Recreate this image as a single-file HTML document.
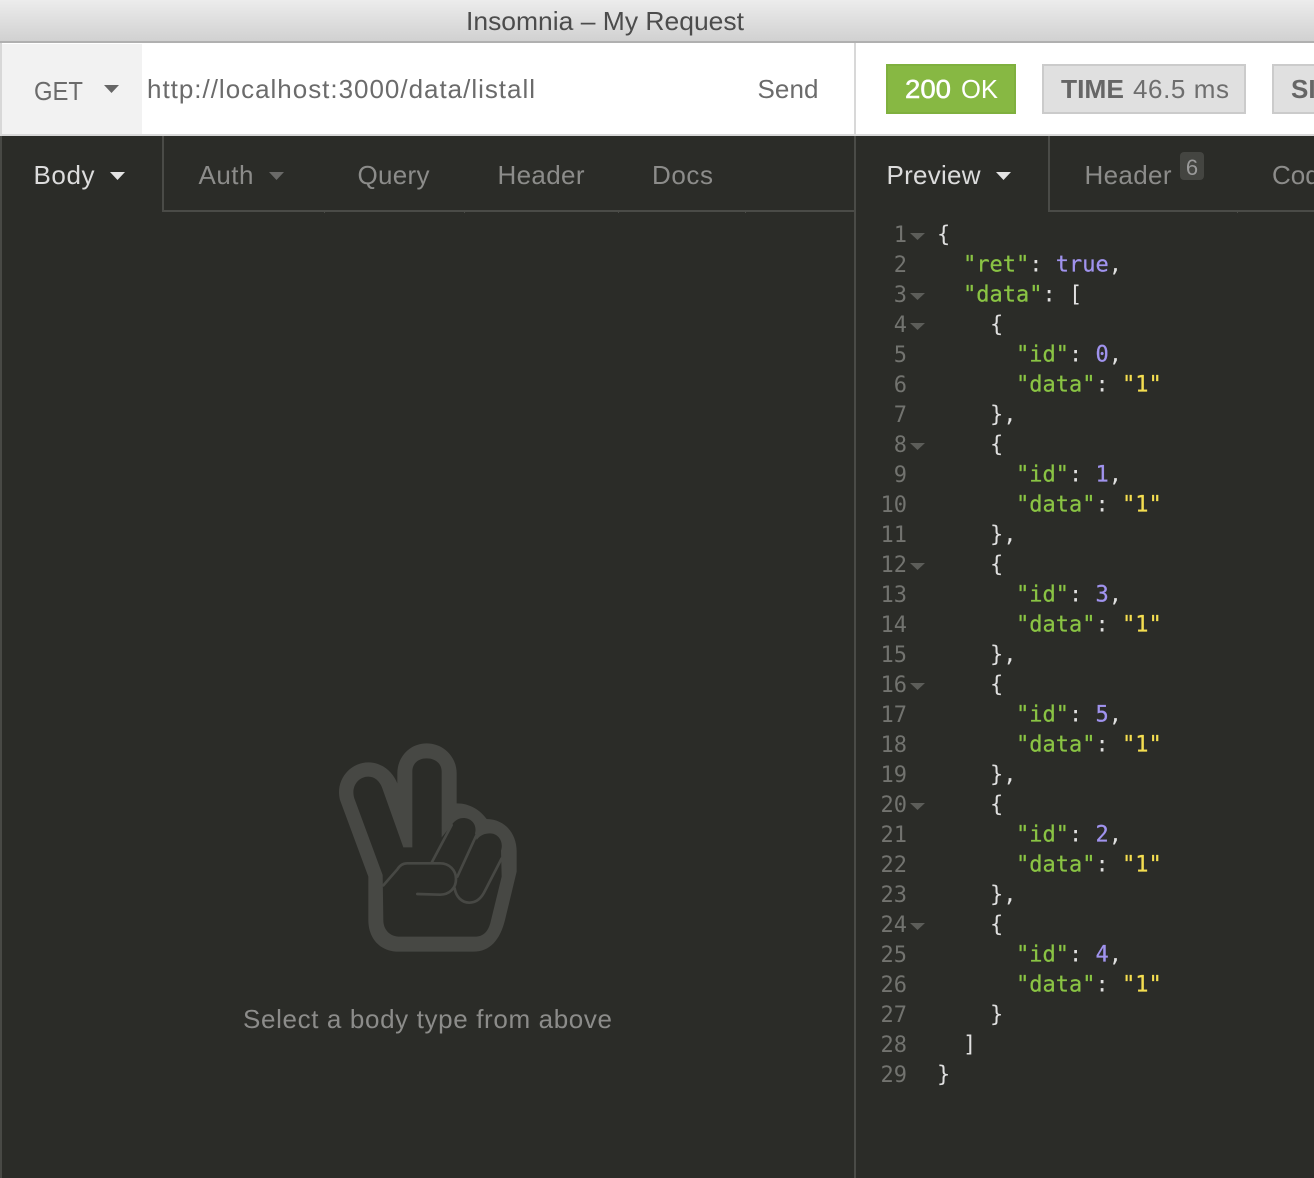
<!DOCTYPE html>
<html><head><meta charset="utf-8"><title>Insomnia – My Request</title>
<style>
html,body{margin:0;padding:0;width:1314px;height:1178px;overflow:hidden;background:#2b2c28}
svg{display:block;position:absolute;left:0;top:0}
.s{font-family:"Liberation Sans",sans-serif;font-size:26px}
.m text{font-family:"DejaVu Sans Mono","Liberation Mono",monospace;font-size:22px;white-space:pre;fill:#e0e0e0}
.n text{font-family:"DejaVu Sans Mono","Liberation Mono",monospace;font-size:22px;fill:#72736f;text-anchor:end}
.k{fill:#8ac444;stroke:#8ac444;stroke-width:.25}.v{fill:#a093ee;stroke:#a093ee;stroke-width:.25}.y{fill:#f4de50;stroke:#f4de50;stroke-width:.25}
</style></head>
<body>
<svg width="1314" height="1178" viewBox="0 0 1314 1178" xmlns="http://www.w3.org/2000/svg">
<defs><linearGradient id="g" x1="0" y1="0" x2="0" y2="1"><stop offset="0" stop-color="#ececec"/><stop offset="1" stop-color="#d1d1d1"/></linearGradient></defs>
<rect width="1314" height="1178" fill="#2b2c28"/>
<rect width="1314" height="41" fill="url(#g)"/>
<rect y="41" width="1314" height="2" fill="#b0b0b0"/>
<text class="s" x="466" y="30" fill="#4c4c4c" textLength="278" lengthAdjust="spacingAndGlyphs">Insomnia – My Request</text>

<rect y="43" width="1314" height="91" fill="#fff"/>
<rect x="2" y="44" width="140" height="90" fill="#f2f2f2"/>
<rect y="43" width="2" height="93" fill="#d8d8d8"/>
<rect y="134" width="1314" height="2" fill="#d8d8d8"/>
<rect x="854" y="43" width="2" height="93" fill="#d8d8d8"/>
<text class="s" x="34" y="100" fill="#6b6b6b" textLength="49" lengthAdjust="spacingAndGlyphs">GET</text>
<path d="M104 85h15l-7.500 8z" fill="#666"/>
<text class="s" x="147" y="98" fill="#6b6b6b" textLength="388">http://localhost:3000/data/listall</text>
<text class="s" x="757.500" y="98" fill="#6b6b6b" textLength="61">Send</text>

<rect x="886" y="64" width="130" height="50" fill="#7fb03e"/>
<rect x="888" y="66" width="126" height="46" fill="#87b843"/>
<text class="s" x="905" y="98" fill="#fff" stroke="#fff" stroke-width=".5" textLength="46" lengthAdjust="spacingAndGlyphs">200</text>
<text class="s" x="961" y="98" fill="#fff" textLength="37" lengthAdjust="spacingAndGlyphs">OK</text>
<rect x="1043" y="65" width="202" height="48" fill="#e0e0e0" stroke="#cbcbcb" stroke-width="2"/>
<text class="s" x="1061" y="98" fill="#666" font-weight="bold" textLength="63" lengthAdjust="spacingAndGlyphs">TIME</text>
<text class="s" x="1133" y="98" fill="#6e6e6e" textLength="96">46.5 ms</text>
<rect x="1273" y="65" width="60" height="48" fill="#e0e0e0" stroke="#cbcbcb" stroke-width="2"/>
<text class="s" x="1291" y="98" fill="#666" font-weight="bold">SI</text>

<rect x="0" y="136" width="2" height="1042" fill="#484945"/>
<rect x="854" y="136" width="2" height="1042" fill="#4a4b47"/>
<rect x="162" y="136" width="2" height="76" fill="#4a4b47"/>
<rect x="162" y="210" width="692" height="2" fill="#4a4b47"/>
<rect x="1048" y="136" width="2" height="76" fill="#4a4b47"/>
<rect x="1048" y="210" width="266" height="2" fill="#4a4b47"/>
<path d="M324 212h1v1h-1zM464 212h1v1h-1zM618 212h1v1h-1zM745 212h1v1h-1zM1237 212h1v1h-1z" fill="#4a4b47"/>

<text class="s" x="33.500" y="184" fill="#dcdcdc" textLength="61">Body</text>
<path d="M110 172h15l-7.500 8z" fill="#e4e4e4"/>
<text class="s" x="198.500" y="184" fill="#8c8c8a" textLength="55">Auth</text>
<path d="M269 172h15l-7.500 8z" fill="#6a6a68"/>
<text class="s" x="357.500" y="184" fill="#8c8c8a" textLength="72">Query</text>
<text class="s" x="497.500" y="184" fill="#8c8c8a" textLength="87">Header</text>
<text class="s" x="652" y="184" fill="#8c8c8a" textLength="61">Docs</text>

<text class="s" x="886.500" y="184" fill="#dcdcdc" textLength="94">Preview</text>
<path d="M996 172h15l-7.500 8z" fill="#e4e4e4"/>
<text class="s" x="1084.500" y="184" fill="#8c8c8a" textLength="87">Header</text>
<rect x="1180" y="152" width="24" height="28" rx="4" fill="#444541"/>
<text x="1192" y="175" text-anchor="middle" fill="#999" style="font-family:'Liberation Sans',sans-serif;font-size:22px">6</text>
<text class="s" x="1272" y="184" fill="#8c8c8a">Code</text>

<svg x="320" y="730" width="220" height="235" viewBox="0 0 660 705">
<path fill="#474844" fill-rule="evenodd" d="M145 440 L60 210 C45 150 90 97 145 97 C185 97 218 125 232 160 L232 130 C232 80 270 40 320 40 C370 40 410 80 410 130 L410 220 C450 220 480 240 500 267 C555 268 590 310 590 365 L590 425 L555 570 C540 630 510 665 460 665 L235 665 C180 665 145 625 145 570 Z
M188 435 L103 205 C92 170 115 140 145 140 C165 140 180 155 187 175 L250 352 L277 352 L277 125 C277 100 295 85 320 85 C345 85 365 100 365 125 L365 322 L395 285 C405 270 418 264 430 264 C455 264 472 285 465 310 L470 330 C480 315 495 310 510 310 C535 310 552 335 543 362 L545 440 L512 575 C505 605 490 620 465 620 L240 620 C210 620 190 600 190 570 Z"/>
<path fill="none" stroke="#474844" stroke-width="8" stroke-linecap="round" d="M190 466 L232 418 C240 405 250 400 262 400 L360 400 C388 400 408 420 408 447 C408 475 388 494 360 494 L292 492 M335 398 L395 285 M468 318 L412 440 M545 385 L492 488 C480 510 465 518 448 518 C425 518 408 500 404 475"/>
</svg>
<text class="s" x="243" y="1028" fill="#8c8c8a" textLength="369">Select a body type from above</text>

<g class="n">
<text x="907" y="242">1</text><text x="907" y="272">2</text><text x="907" y="302">3</text><text x="907" y="332">4</text><text x="907" y="362">5</text><text x="907" y="392">6</text><text x="907" y="422">7</text><text x="907" y="452">8</text><text x="907" y="482">9</text><text x="907" y="512">10</text><text x="907" y="542">11</text><text x="907" y="572">12</text><text x="907" y="602">13</text><text x="907" y="632">14</text><text x="907" y="662">15</text><text x="907" y="692">16</text><text x="907" y="722">17</text><text x="907" y="752">18</text><text x="907" y="782">19</text><text x="907" y="812">20</text><text x="907" y="842">21</text><text x="907" y="872">22</text><text x="907" y="902">23</text><text x="907" y="932">24</text><text x="907" y="962">25</text><text x="907" y="992">26</text><text x="907" y="1022">27</text><text x="907" y="1052">28</text><text x="907" y="1082">29</text>
</g>
<path fill="#5c5d59" d="M910 233h15l-7.500 7zM910 293h15l-7.500 7zM910 323h15l-7.500 7zM910 443h15l-7.500 7zM910 563h15l-7.500 7zM910 683h15l-7.500 7zM910 803h15l-7.500 7zM910 923h15l-7.500 7z"/>

<g class="m">
<text x="937" y="241.500">{</text>
<text x="963" y="271.500"><tspan class="k">"ret"</tspan>: <tspan class="v">true</tspan>,</text>
<text x="963" y="301.500"><tspan class="k">"data"</tspan>: [</text>
<text x="990" y="331.500">{</text>
<text x="1016" y="361.500"><tspan class="k">"id"</tspan>: <tspan class="v">0</tspan>,</text>
<text x="1016" y="391.500"><tspan class="k">"data"</tspan>: <tspan class="y">"1"</tspan></text>
<text x="990" y="421.500">},</text>
<text x="990" y="451.500">{</text>
<text x="1016" y="481.500"><tspan class="k">"id"</tspan>: <tspan class="v">1</tspan>,</text>
<text x="1016" y="511.500"><tspan class="k">"data"</tspan>: <tspan class="y">"1"</tspan></text>
<text x="990" y="541.500">},</text>
<text x="990" y="571.500">{</text>
<text x="1016" y="601.500"><tspan class="k">"id"</tspan>: <tspan class="v">3</tspan>,</text>
<text x="1016" y="631.500"><tspan class="k">"data"</tspan>: <tspan class="y">"1"</tspan></text>
<text x="990" y="661.500">},</text>
<text x="990" y="691.500">{</text>
<text x="1016" y="721.500"><tspan class="k">"id"</tspan>: <tspan class="v">5</tspan>,</text>
<text x="1016" y="751.500"><tspan class="k">"data"</tspan>: <tspan class="y">"1"</tspan></text>
<text x="990" y="781.500">},</text>
<text x="990" y="811.500">{</text>
<text x="1016" y="841.500"><tspan class="k">"id"</tspan>: <tspan class="v">2</tspan>,</text>
<text x="1016" y="871.500"><tspan class="k">"data"</tspan>: <tspan class="y">"1"</tspan></text>
<text x="990" y="901.500">},</text>
<text x="990" y="931.500">{</text>
<text x="1016" y="961.500"><tspan class="k">"id"</tspan>: <tspan class="v">4</tspan>,</text>
<text x="1016" y="991.500"><tspan class="k">"data"</tspan>: <tspan class="y">"1"</tspan></text>
<text x="990" y="1021.500">}</text>
<text x="963" y="1051.500">]</text>
<text x="937" y="1081.500">}</text>
</g>
</svg>
</body></html>
